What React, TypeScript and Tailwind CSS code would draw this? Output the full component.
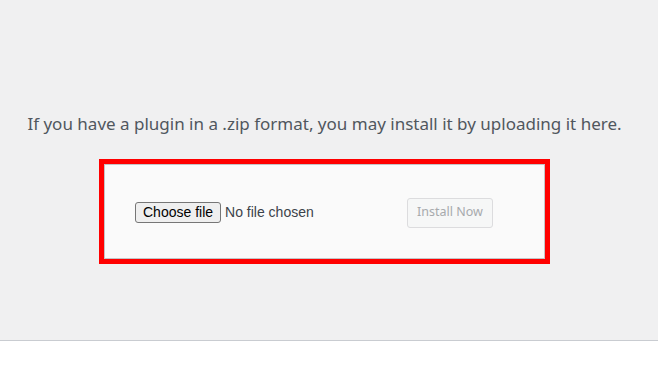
export default function App() {
  return (
    <div className="w-[658px] h-[384px] bg-white overflow-hidden">
      <div className="h-[341px] bg-[#f0f0f1] border-b border-[#c9ccd1] flex flex-col items-center pr-[9px]">
        <p className="mt-[112px] h-[24px] leading-[24px] text-[17px] text-[#50575e] font-['Noto_Sans',sans-serif] whitespace-nowrap">
          If you have a plugin in a .zip format, you may install it by uploading it here.
        </p>
        <div className="mt-[23px] w-[451px] h-[105px] border-[5px] border-[#ff0000]">
          <div className="w-full h-full bg-[#fafafa] border border-[#c3c4c7] flex items-center pl-[30px] pr-[51px] pt-[2px] justify-between">
            <div className="flex items-center font-['Liberation_Sans',sans-serif] text-[14px]">
              <span className="h-[21px] px-[7px] flex items-center bg-[#efefef] border border-[#767676] rounded-[3px] text-black">
                Choose file
              </span>
              <span className="ml-[4px] text-[#3c434a]">No file chosen</span>
            </div>
            <span className="h-[30px] w-[86px] flex items-center justify-center rounded-[3px] border border-[#dcdcde] bg-[#f6f7f7] text-[#a7aaad] text-[12.5px] font-['Noto_Sans',sans-serif]">
              Install Now
            </span>
          </div>
        </div>
      </div>
    </div>
  );
}
